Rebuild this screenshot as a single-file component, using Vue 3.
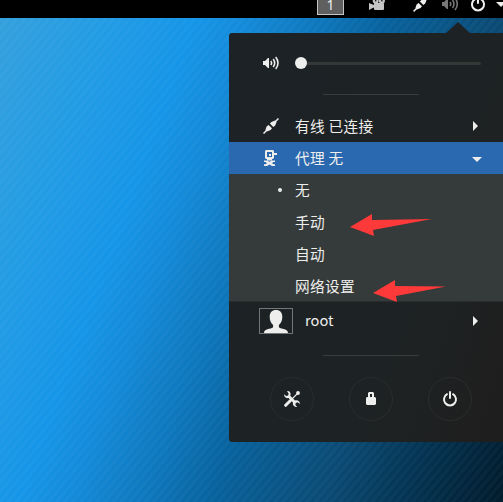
<script setup>
const proxyOptions = [
  { label: '无', active: true },
  { label: '手动' },
  { label: '自动' },
  { label: '网络设置' },
]
</script>

<template>
  <div class="desktop">
    <header class="topbar">
      <span class="workspace">1</span>
      <svg class="camera" width="16" height="16" viewBox="0 0 16 16">
        <path fill-rule="evenodd" d="M6.7 1.8a3 3 0 1 1 0 6a3 3 0 1 1 0-6zM6.7 4a.8.8 0 1 0 0 1.6a.8.8 0 1 0 0-1.6z" />
        <path fill-rule="evenodd" d="M12.9 1.8a3 3 0 1 1 0 6a3 3 0 1 1 0-6zM12.9 4a.8.8 0 1 0 0 1.6a.8.8 0 1 0 0-1.6z" />
        <rect x="5" y="7" width="10" height="7" rx="1" /><path d="M0 7l4.2 1.8h1v3h-1L0 14z" />
      </svg>
      <svg class="plug" width="16" height="16" viewBox="0 0 16 16">
        <path d="M.6 15.4L4 12M12 4L15.4 .6" class="wire" />
        <path d="M2.4 12L3.6 8.6 5.6 6.9 9 10.3 7.6 12 4 13.6zM6.9 5.6L8.4 4 12 2.4l1.6 1.6-1.4 3.5-1.9 1.5z" />
      </svg>
      <svg class="volume" width="17" height="16" viewBox="0 0 17 16">
        <path d="M0 6h2l3-3h1v10H5l-3-3H0z" />
        <path d="M8 6q1.5 2 0 4M10.5 4q3 4 0 8M13 2q4.6 6 0 12" class="wave" />
      </svg>
      <svg class="power" width="16" height="16" viewBox="0 0 16 16">
        <path d="M5 3.2a6 6 0 1 0 6 0M8 1v6" class="power-line" />
      </svg>
      <svg class="caret" width="10" height="5" viewBox="0 0 10 5"><path d="M0 0h10L5 5z" /></svg>
    </header>

    <main class="menu">
      <div class="pointer"></div>
      <div class="slider-row">
        <svg width="17" height="16" viewBox="0 0 17 16">
          <path d="M0 6h2l3-3h1v10H5l-3-3H0z" />
          <path d="M7.8 6q1.5 2 0 4M10.2 4q3 4 0 8M12.7 2q4.6 6 0 12" class="wave" />
        </svg>
        <div class="slider"><span class="knob"></span><span class="track"></span></div>
      </div>
      <div class="divider"></div>
      <div class="row wired">
        <svg class="icon" width="16" height="16" viewBox="0 0 16 16">
          <path d="M.5 15.5L4 12M12 4L15.5 .5" class="wire" />
          <path d="M2.4 12L3.6 8.6 5.6 6.9 9 10.3 7.6 12 4 13.6zM6.9 5.6L8.4 4 12 2.4l1.6 1.6-1.4 3.5-1.9 1.5z" />
        </svg>
        <span class="label">有线 已连接</span>
        <svg class="side" width="5" height="10" viewBox="0 0 5 10"><path d="M0 0l5 5-5 5z" /></svg>
      </div>
      <div class="row proxy">
        <svg class="icon" width="16" height="16" viewBox="0 0 16 16">
          <path fill-rule="evenodd" d="M3 0h7l1 1v2h3v2h-3v3l-1 1H3L2 8V1zM4 2v5h5V2z" />
          <path d="M6 4h2v2H6zM4 9h5v1.5H4zM1 10.5h3l2.5 1.2L9 10.5h3V12h-1.5L9 13.2l1.5 1H12V16H9l-2.5-1.5L4 16H1v-1.8h1.5l1.5-1L2.5 12H1z" />
        </svg>
        <span class="label">代理 无</span>
        <svg class="down" width="10" height="5" viewBox="0 0 10 5"><path d="M0 0h10L5 5z" /></svg>
      </div>
      <div class="submenu">
        <div v-for="option in proxyOptions" :key="option.label" class="option">
          <span class="dot" :class="{ active: option.active }"></span><span class="text">{{ option.label }}</span>
        </div>
      </div>
      <div class="row user">
        <span class="avatar">
          <svg width="24" height="23" viewBox="0 0 24 23">
            <path d="M12 0C8 0 5.7 2.6 5.7 7c0 3.5 1.4 6.3 3.4 8v2.2C6.5 19.4 0 18.5 0 23h24c0-4.5-6.5-3.6-9.1-5.8V15c2-1.7 3.4-4.5 3.4-8C18.3 2.6 16 0 12 0z" />
          </svg>
        </span>
        <span class="label">root</span>
        <svg class="side" width="5" height="10" viewBox="0 0 5 10"><path d="M0 0l5 5-5 5z" /></svg>
      </div>
      <div class="divider"></div>
      <div class="actions">
        <span class="action">
          <svg width="16" height="16" viewBox="0 0 16 16">
            <path d="M3 0C5.4-.3 7 1.7 6.5 4l-.3.8L11 9.5c2.5-.8 5 .7 5 3.5l-2.3-1.7-2 .6-.3 2L13.2 16c-2.9.4-4.9-2-4.2-4.5L4.5 7C2 7.6 0 6 0 3.3L2.2 5l2-.6.4-2z" />
            <path d="M9.5 6.5L15 1" class="cut" /><path d="M7 9L14 2" class="thin" />
            <path d="M1.7 14.3L6.5 9.5" class="handle" /><circle cx="14" cy="2" r="1.9" />
          </svg>
        </span>
        <span class="action">
          <svg width="16" height="16" viewBox="0 0 16 16">
            <path fill-rule="evenodd" d="M5 6V2l1-1h4l1 1v4h1l1 1v6l-1 1H4l-1-1V7l1-1zM7 6h2V3H7z" />
          </svg>
        </span>
        <span class="action">
          <svg width="16" height="16" viewBox="0 0 16 16"><path d="M5 3.2a6 6 0 1 0 6 0M8 1v6" class="power-line" /></svg>
        </span>
      </div>
      <svg class="arrow first" width="82" height="23" viewBox="0 0 82 23"><path d="M0 13L22 0v6l60-1-59 11 1 6z" /></svg>
      <svg class="arrow second" width="74" height="23" viewBox="0 0 74 23"><path d="M0 13L22 0v6l51 .5-50 9.5 1 6z" /></svg>
    </main>
  </div>
</template>

<style>
body { overflow: hidden; }
</style>

<style scoped>
.desktop {
  width: 503px;
  height: 502px;
  overflow: hidden;
  font-family: "Noto Sans CJK SC", "Noto Sans", sans-serif;
  color: #eeeeec;
  background:
    repeating-linear-gradient(-50deg, rgba(255, 255, 255, 0.028) 0 2.4px, rgba(255, 255, 255, 0) 3.4px 5.2px, rgba(255, 255, 255, 0.028) 6.2px),
    linear-gradient(110deg, #35a0dc 0, #239ce4 100px, #1595e8 190px, #148bda 235px, #0d76bb 310px, #07629d 370px, #0a4a74 475px, #033453 550px, #011c2e 638px);
}
.desktop svg { display: block; fill: #eeeeec; flex: none; }
.desktop .wire { fill: none; stroke: #eeeeec; stroke-width: 1.5; }
.desktop .wave { fill: none; stroke: #eeeeec; stroke-width: 1.6; }
.desktop .power-line { fill: none; stroke: #eeeeec; stroke-width: 2; stroke-linecap: round; }
.desktop .cut { fill: none; stroke: #1e2223; stroke-width: 3; }
.desktop .thin { fill: none; stroke: #eeeeec; stroke-width: 1.1; }
.desktop .handle { fill: none; stroke: #eeeeec; stroke-width: 3; stroke-linecap: round; }
.topbar { height: 18px; background: #000; display: flex; align-items: flex-start; padding-left: 317px; overflow: hidden; }
.workspace {
  box-sizing: border-box;
  flex: none;
  width: 27px;
  height: 15px;
  border: 1px solid #c4c4c4;
  border-top: 0;
  background: #5f5f5f;
  text-align: center;
  font-family: "Noto Sans", sans-serif;
  font-size: 14px;
  line-height: 10px;
}
.topbar .camera { margin: -4px 0 0 25px; fill: #c5c5c5; }
.desktop .topbar .camera { fill: #c5c5c5; }
.topbar .plug { margin: -4px 0 0 28px; }
.topbar .volume { margin: -4px 0 0 13px; }
.desktop .topbar .volume { fill: #777; }
.desktop .topbar .volume .wave { stroke: #777; }
.topbar .power { margin: -4px 0 0 11px; }
.topbar .caret { margin: 2px 0 0 10px; }
.menu {
  position: relative;
  box-sizing: border-box;
  width: 274px;
  height: 409px;
  margin: 15px 0 0 229px;
  padding-top: 14px;
  border-radius: 3px 0 0 3px;
  background: linear-gradient(110deg, #1c2226 0, #1e2223 75%, #1f1e1e 94%);
}
.pointer { position: absolute; left: 217px; top: -11px; border: 12px solid transparent; border-top: 0; border-bottom: 11px solid #1e2224; }
.slider-row { height: 32px; display: flex; align-items: center; padding-left: 34px; }
.slider { display: flex; align-items: center; margin-left: 15px; }
.knob { width: 12px; height: 12px; border-radius: 50%; background: #eeeeec; }
.track { width: 174px; height: 3px; background: #343837; border-radius: 0 2px 2px 0; }
.divider { width: 96px; height: 1px; background: #383c3d; margin: 15px 0 0 94px; }
.row { height: 32px; display: flex; align-items: center; font-size: 14.67px; letter-spacing: 0.33px; }
.row .icon { margin-left: 34px; }
.row .label { margin-left: 16px; padding-bottom: 1px; flex: 1; white-space: nowrap; }
.row .side { margin-right: 25px; }
.wired { margin-top: 15px; }
.proxy { background: #2a69b0; }
.proxy .down { margin: 3px 21px 0 0; }
.submenu { height: 127px; background: #353a3a; border-bottom: 1px solid #292d2e; }
.option { height: 32px; display: flex; align-items: center; font-size: 14.67px; letter-spacing: 0.33px; padding-left: 49px; }
.option .text { padding-bottom: 1px; }
.dot { width: 4px; height: 4px; border-radius: 50%; margin-right: 13px; }
.dot.active { background: #eeeeec; }
.user { height: 38px; }
.avatar { box-sizing: border-box; width: 34px; height: 26px; border: 1px solid #747777; margin-left: 30px; display: flex; justify-content: center; align-items: flex-end; }
.user .label { margin-left: 12px; padding-bottom: 3px; letter-spacing: 0; }
.user + .divider { margin-top: 15px; }
.actions { display: flex; gap: 35px; padding: 21px 0 0 41px; }
.action { box-sizing: border-box; width: 44px; height: 44px; border: 1px solid #2a2d2e; border-radius: 50%; display: flex; align-items: center; justify-content: center; }
.desktop .arrow { position: absolute; fill: #fd3939; }
.first { left: 121px; top: 181px; }
.second { left: 144px; top: 247px; }
</style>
